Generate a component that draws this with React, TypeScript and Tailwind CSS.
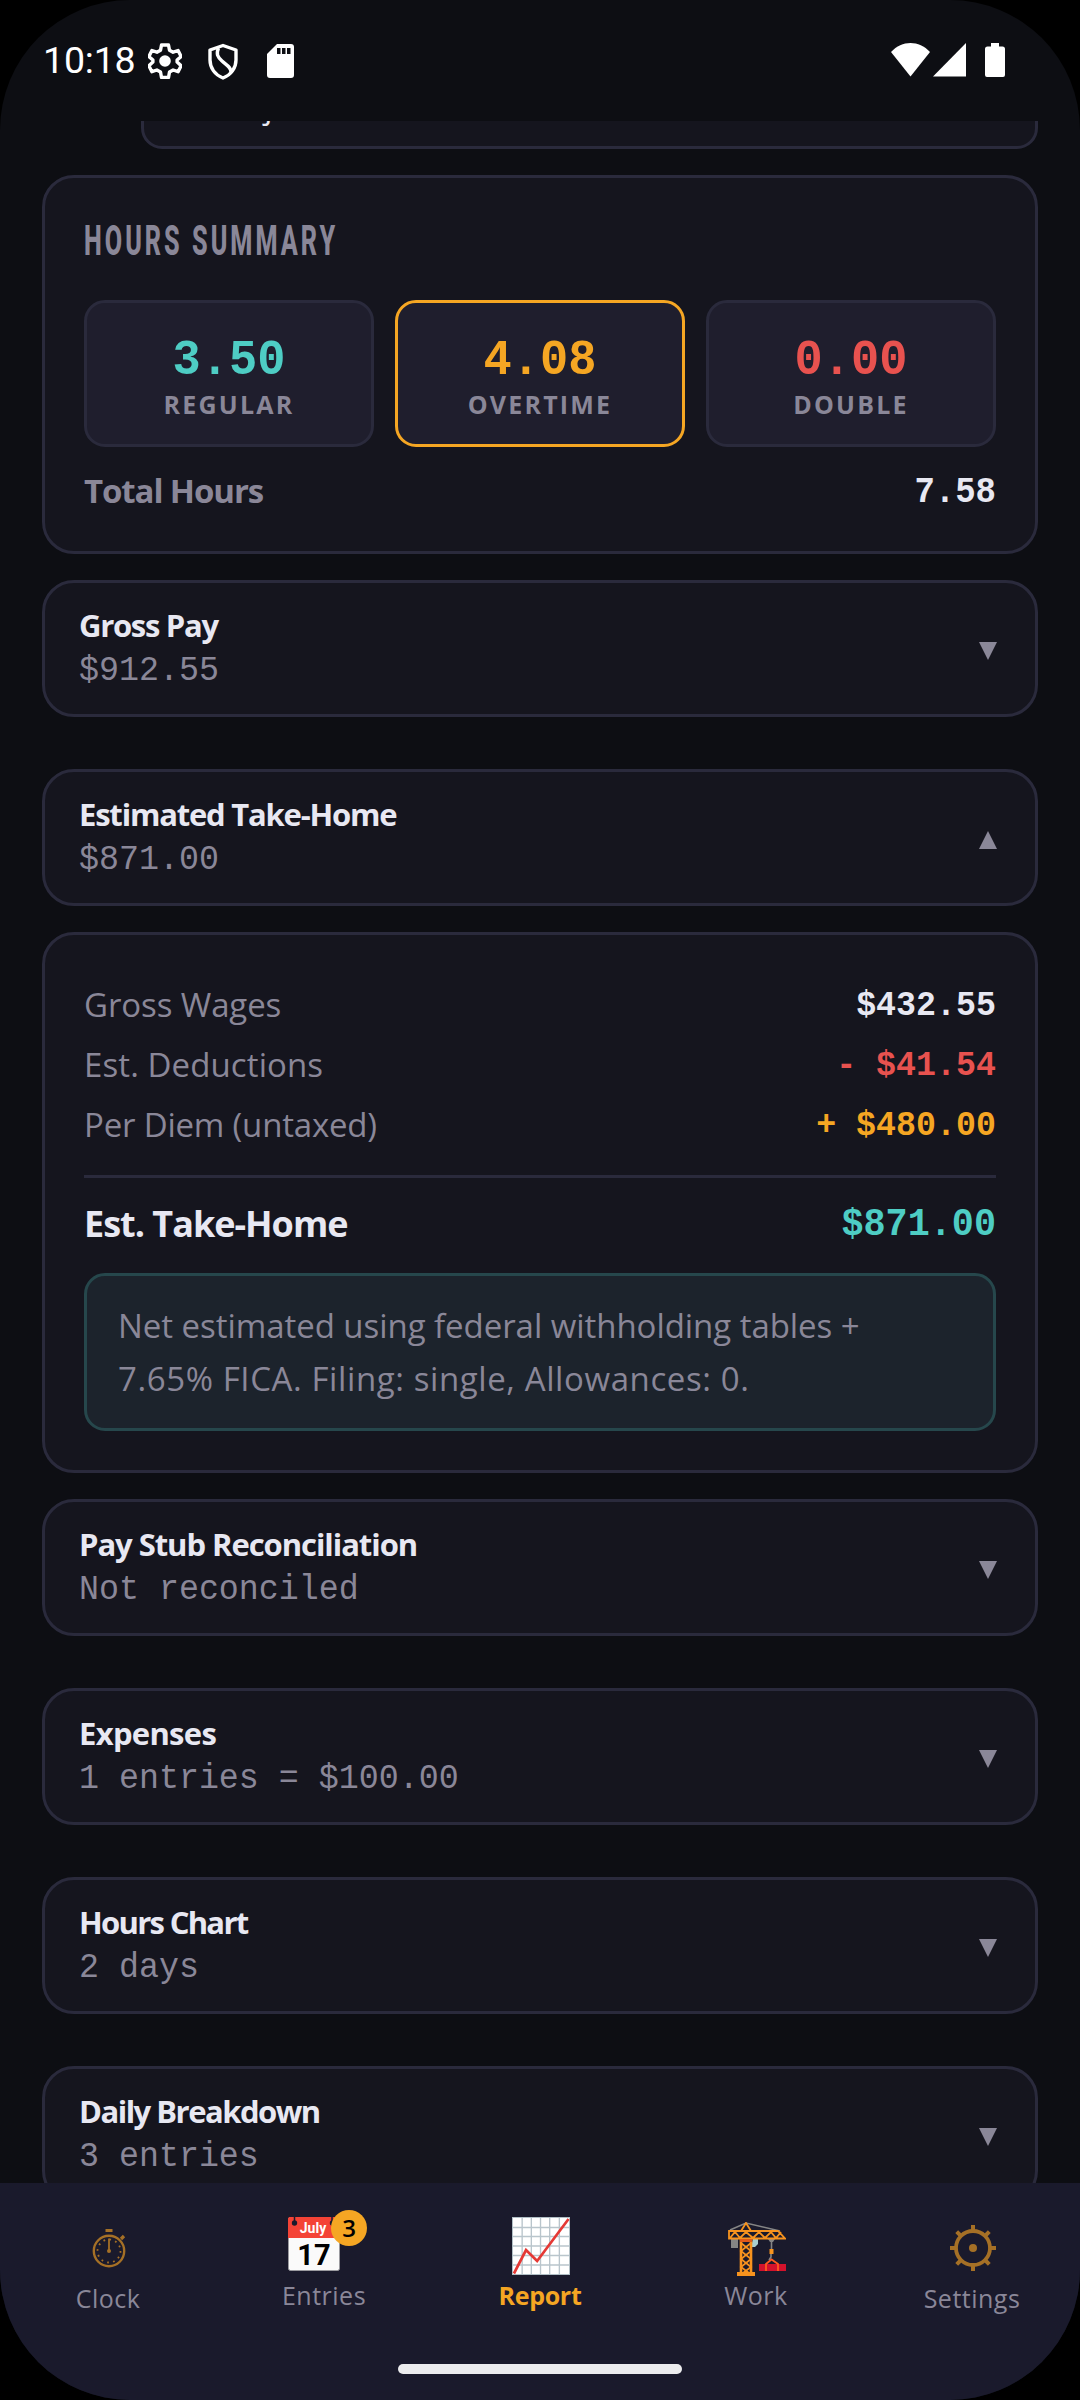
import React from 'react';
import { clsx } from 'clsx';

const sans = "font-['Open_Sans','Noto_Sans',sans-serif]";
const mono = "font-['Liberation_Mono',monospace] inline-block origin-bottom scale-y-[1.07] translate-y-[3px]";

const StatusBar: React.FC = () => (
  <header className="h-[121px] shrink-0 flex items-start justify-between pt-[43px] pl-[43px] pr-[75px] text-white">
    <div className="flex items-start">
      <span className="font-['Roboto',sans-serif] text-[37.5px] leading-[34px] tracking-[-0.2px]">10:18</span>
      <svg className="ml-[13px] w-[34px] h-[36px]" viewBox="0 0 34 36" fill="none" stroke="currentColor" strokeWidth="3.4" strokeLinejoin="round">
        <path d="M13.5 2h7l1 5.2 3.6 2 5-1.700 3 6-4 3.600v2l4 3.600-3 6-5-1.700-3.600 2-1 5.500h-7l-1-5.500-3.600-2-5 1.700-3-6 4-3.600v-2l-4-3.600 3-6 5 1.700 3.600-2z" />
        <circle cx="17" cy="18" r="5.8" fill="currentColor" stroke="none" />
      </svg>
      <svg className="ml-[25px] w-[32px] h-[37px]" viewBox="0 0 32 37" fill="none" stroke="currentColor" strokeWidth="3.4" strokeLinejoin="round">
        <path d="M16 2.500 29 7v10c0 8-5 15-13 18C8 32 3 25 3 17V7z" />
        <path d="M11.500 5c-2.500 6-1 9 3.500 13s9 6 9 11" />
      </svg>
      <svg className="ml-[28px] mt-px w-[27px] h-[34px]" viewBox="0 0 27 34">
        <path d="M10 0h14a3 3 0 0 1 3 3v28a3 3 0 0 1-3 3H3a3 3 0 0 1-3-3V10z" fill="currentColor" />
        <path d="M10 4h3.500v6H10zM15 4h3.500v6H15zM20 4h3.500v6H20z" fill="#0d0e13" />
      </svg>
    </div>
    <div className="flex items-start">
      <svg className="w-[39px] h-[34px]" viewBox="0 0 39 34" fill="currentColor">
        <path d="M0 9C11-3 28-3 39 9L19.500 33.500z" />
      </svg>
      <svg className="ml-[3px] w-[33px] h-[34px]" viewBox="0 0 33 34" fill="currentColor">
        <path d="M33 0v33.500H0z" />
      </svg>
      <svg className="ml-[19px] w-[20px] h-[34px]" viewBox="0 0 20 34" fill="currentColor">
        <path d="M6 0h8v3.500h3.500A2.500 2.500 0 0 1 20 6v26a2 2 0 0 1-2 2H2a2 2 0 0 1-2-2V6a2.500 2.500 0 0 1 2.500-2.500H6z" />
      </svg>
    </div>
  </header>
);

interface Stat {
  value: string;
  label: string;
  color: string;
  border: string;
}

const stats: Stat[] = [
  { value: '3.50', label: 'REGULAR', color: 'text-[#4ecdc4]', border: 'border-[#2a2a3c]' },
  { value: '4.08', label: 'OVERTIME', color: 'text-[#f5a623]', border: 'border-[#f5a623]' },
  { value: '0.00', label: 'DOUBLE', color: 'text-[#e8524f]', border: 'border-[#2a2a3c]' },
];

const HoursSummary: React.FC = () => (
  <section className="h-[379px] shrink-0 rounded-[32px] border-[3px] border-[#2a2a3c] bg-[#15151e] px-[39px] pt-[41px]">
    <h2 className="h-[44px] w-[500px] origin-left scale-x-[0.6] whitespace-nowrap font-['Roboto',sans-serif] text-[42px] leading-[44px] font-extrabold tracking-[5px] text-[#8a8798]">
      HOURS SUMMARY
    </h2>
    <div className="mt-[37px] grid grid-cols-3 gap-[21px]">
      {stats.map(s => (
        <div key={s.label} className={clsx('h-[147px] rounded-[21px] border-[3px] bg-[#1f1e2d] flex flex-col items-center pt-[29px]', s.border)}>
          <span className={clsx(mono, 'text-[47px] leading-[56px] font-bold', s.color)}>{s.value}</span>
          <span className={clsx(sans, '-mt-0.5 text-[25px] leading-[36px] font-bold tracking-[2.2px] text-[#8a8798]')}>{s.label}</span>
        </div>
      ))}
    </div>
    <div className="mt-[21px] flex justify-between items-center h-[46px]">
      <span className={clsx(sans, 'text-[33px] font-bold tracking-[-1.1px] text-[#8a8798]')}>Total Hours</span>
      <span className={clsx(mono, 'text-[34px] font-bold text-[#e8e8f2]')}>7.58</span>
    </div>
  </section>
);

interface AccordionProps {
  title: string;
  detail: string;
  tracking: string;
  open?: boolean;
}

const Accordion: React.FC<AccordionProps> = ({ title, detail, tracking, open }) => (
  <section className="h-[137px] shrink-0 rounded-[32px] border-[3px] border-[#2a2a3c] bg-[#15151e] pl-[34px] pr-[38px] flex items-center justify-between">
    <div className="flex flex-col items-start pb-0.5">
      <h3 className={clsx(sans, tracking, 'text-[31px] leading-[42px] font-bold text-[#e8e8f2]')}>{title}</h3>
      <p className={clsx(mono, 'text-[33.3px] leading-[46px] whitespace-pre text-[#8a8798]')}>{detail}</p>
    </div>
    <svg className="w-[18px] h-[18px] mt-1" viewBox="0 0 18 18" fill="#8a8798">
      <path d={open ? 'M9 0l9 18H0z' : 'M0 0h18L9 18z'} />
    </svg>
  </section>
);

const payRows = [
  { label: 'Gross Wages', amount: '$432.55', color: 'text-[#e8e8f2]', tracking: 'tracking-[-0.1px]' },
  { label: 'Est. Deductions', amount: '- $41.54', color: 'text-[#e8524f]', tracking: 'tracking-[0.1px]' },
  { label: 'Per Diem (untaxed)', amount: '+ $480.00', color: 'text-[#f5a623]', tracking: 'tracking-[-0.2px]' },
];

const TakeHomeDetails: React.FC = () => (
  <section className="h-[541px] shrink-0 rounded-[32px] border-[3px] border-[#2a2a3c] bg-[#15151e] px-[39px] pt-[40px]">
    {payRows.map(row => (
      <div key={row.label} className="h-[60px] flex items-center justify-between">
        <span className={clsx(sans, row.tracking, 'text-[33px] text-[#8a8798]')}>{row.label}</span>
        <span className={clsx(mono, 'text-[33.3px] font-bold whitespace-pre', row.color)}>{row.amount}</span>
      </div>
    ))}
    <div className="mt-[20px] h-[3px] bg-[#2a2a3c]" />
    <div className="mt-[16px] h-[60px] flex items-center justify-between">
      <span className={clsx(sans, 'text-[36px] font-bold tracking-[-1px] text-[#e8e8f2]')}>Est. Take-Home</span>
      <span className={clsx(mono, 'text-[36.8px] font-bold text-[#4ecdc4]')}>$871.00</span>
    </div>
    <p className={clsx(sans, 'mt-[19px] h-[158px] rounded-[21px] border-[3px] border-[#26474c] bg-[#1c232c] px-[31px] pt-[23px] text-[33px] leading-[53px] whitespace-nowrap text-[#8a8798]')}>
      <span className="block tracking-[-0.05px]">Net estimated using federal withholding tables +</span>
      <span className="block tracking-[0.6px]">7.65% FICA. Filing: single, Allowances: 0.</span>
    </p>
  </section>
);

const ClockIcon: React.FC = () => (
  <svg className="w-[34px] h-[40px] ml-[2px]" viewBox="0 0 34 40" fill="none" stroke="#a57026">
    <circle cx="17" cy="23" r="15.2" strokeWidth="2.4" />
    <circle cx="17" cy="23" r="11.5" strokeWidth="1.8" strokeDasharray="1.8 4.22" />
    <path d="M17 23V10.500" strokeWidth="1.8" />
    <path d="M13.500 2.500h7M29 11l3-3" strokeWidth="3.2" />
    <circle cx="17" cy="23" r="2" fill="#a57026" stroke="none" />
  </svg>
);

const CalendarIcon: React.FC = () => (
  <svg className="w-[52px] h-[54px] mr-[20px]" viewBox="0 0 52 54">
    <rect x="0.5" y="0.5" width="51" height="53" rx="2" fill="#fafafa" stroke="#9a9a9f" />
    <path d="M0 2a2 2 0 0 1 2-2h48a2 2 0 0 1 2 2v19H0z" fill="#f44336" />
    <path d="M6.500 0v5M44 0v5" stroke="#1a1a2c" strokeWidth="1.5" />
    <circle cx="6.5" cy="6" r="2.7" fill="#1a1a2c" />
    <circle cx="44.5" cy="6" r="2.7" fill="#1a1a2c" />
    <text x="25" y="15.5" textAnchor="middle" fontFamily="Roboto" fontSize="14" fontWeight="700" fill="#fff">July</text>
    <text x="26" y="47.5" textAnchor="middle" fontFamily="Roboto" fontSize="29" fontWeight="700" fill="#000">17</text>
  </svg>
);

const ChartIcon: React.FC = () => (
  <svg className="w-[58px] h-[58px] ml-[2px]" viewBox="0 0 60 58" preserveAspectRatio="none" fill="none">
    <rect width="60" height="58" fill="#fff" />
    <path d="M10.500 0v58M20 0v58M29.500 0v58M39 0v58M49 0v58M0 10.500h60M0 19.500h60M0 29h60M0 38.500h60M0 48h60" stroke="#b9c5cc" strokeWidth="1.4" />
    <rect x="0.5" y="0.5" width="59" height="57" stroke="#b0bec5" />
    <path d="M2 56.500 14.500 33l11.500 11L58.500 2" stroke="#e53935" strokeWidth="2.8" />
  </svg>
);

const CraneIcon: React.FC = () => (
  <svg className="w-[58px] h-[54px] ml-[2px]" viewBox="0 0 58 54" fill="none">
    <path d="M2 8 18 1l34 8" stroke="#858585" strokeWidth="1.6" />
    <path d="M3 17h7v9H3zM40 17h7l-2 3h-3z" fill="#858585" />
    <path d="M25 17h5v5l-3 3h-4z" fill="#a8cfd0" />
    <path d="M1 9h49l7 7.500H1zM13 9l5-8 5 8M2 16l5-6 5 6 6-6 7 6 6-6 6 6 6-6 5 6 5-6" stroke="#f7931e" strokeWidth="1.8" />
    <path d="M13 17v34M23 17v34" stroke="#f7931e" strokeWidth="2.6" />
    <path d="m13 21 10 8-10 8 10 8-8 6M23 21l-10 8 10 8-10 8 8 6" stroke="#f7931e" strokeWidth="1.7" />
    <path d="M12 17h12v3H12z" fill="#e05a1a" />
    <path d="M9 50h18v4H9z" fill="#f7931e" />
    <path d="M43.500 20v8M43 32v3l-2 3" stroke="#858585" strokeWidth="1.6" />
    <path d="M41.500 27h4v5h-4z" fill="#f7931e" />
    <path d="M31 42h27v7H31z" fill="#d3122c" />
    <path d="M38 49v-7l5.500-4.500L50 42v7" stroke="#ff5a1f" strokeWidth="1.8" />
  </svg>
);

const SettingsIcon: React.FC = () => (
  <svg className="w-[46px] h-[46px] ml-[2px]" viewBox="0 0 46 46" fill="none" stroke="#a57026">
    <circle cx="23" cy="23" r="17" strokeWidth="3.8" />
    <circle cx="23" cy="23" r="4" fill="#a57026" stroke="none" />
    <path d="M23 0v6M23 40v6M0 23h6M40 23h6M6.700 6.700l4.300 4.300M35 35l4.300 4.300M39.300 6.700 35 11M11 35l-4.300 4.300" strokeWidth="4" />
  </svg>
);

const tabs = [
  { label: 'Clock', icon: <ClockIcon />, pad: 'pt-[45px]', iconBox: 'h-[52px]', tracking: 'tracking-[0.5px]' },
  { label: 'Entries', icon: <CalendarIcon />, pad: 'pt-[34px]', iconBox: 'h-[60px]', badge: 3, tracking: 'tracking-[0.5px]' },
  { label: 'Report', icon: <ChartIcon />, pad: 'pt-[34px]', iconBox: 'h-[60px]', active: true, tracking: 'tracking-[-0.3px]' },
  { label: 'Work', icon: <CraneIcon />, pad: 'pt-[39px]', iconBox: 'h-[55px]', tracking: 'tracking-[0.5px]' },
  { label: 'Settings', icon: <SettingsIcon />, pad: 'pt-[42px]', iconBox: 'h-[55px]', tracking: 'tracking-[0.5px]' },
];

const TabBar: React.FC = () => (
  <nav className="h-[217px] shrink-0 bg-[#1a1a2c] flex flex-col items-center">
    <div className="h-[181px] w-full grid grid-cols-5">
      {tabs.map(tab => (
        <div key={tab.label} className={clsx('relative flex flex-col items-center', tab.pad)}>
          <div className={tab.iconBox}>{tab.icon}</div>
          <span className={clsx(sans, tab.tracking, 'text-[25px] leading-[36px]', tab.active ? 'font-bold text-[#f5a623]' : 'text-[#8a8798]')}>
            {tab.label}
          </span>
          {tab.badge && (
            <span className={clsx(sans, 'absolute left-[115px] top-[27px] w-[36px] h-[36px] rounded-full bg-[#f5a623] text-black text-[24px] leading-[36px] font-semibold text-center')}>
              {tab.badge}
            </span>
          )}
        </div>
      ))}
    </div>
    <div className="w-[284px] h-[10px] rounded-full bg-[#ececee]" />
  </nav>
);

export default function App() {
  return (
    <div className="w-[1080px] h-[2400px] bg-black">
      <div className="w-full h-full rounded-[130px] overflow-hidden bg-[#0d0e13] flex flex-col">
        <StatusBar />
        <main className="flex-1 min-h-0 overflow-hidden px-[42px] flex flex-col">
          <div className="h-[28px] shrink-0 ml-[99px] flex flex-col justify-end overflow-hidden">
            <div className={clsx(sans, 'h-[110px] shrink-0 rounded-[21px] border-[3px] border-[#2a2a3c] bg-[#15151e] pl-[21px] pt-[41px] text-[33px] leading-[45px] text-[#e8e8f2]')}>
              All Projects
            </div>
          </div>
          <div className="mt-[26px] flex flex-col gap-[26px]">
            <HoursSummary />
            <Accordion title="Gross Pay" detail="$912.55" tracking="tracking-[-1.3px]" />
            <div className="mt-[26px] flex flex-col gap-[26px]">
              <Accordion title="Estimated Take-Home" detail="$871.00" tracking="tracking-[-1.2px]" open />
              <TakeHomeDetails />
            </div>
            <div className="flex flex-col gap-[52px]">
              <Accordion title="Pay Stub Reconciliation" detail="Not reconciled" tracking="tracking-[-1.05px]" />
              <Accordion title="Expenses" detail="1 entries = $100.00" tracking="tracking-[-0.7px]" />
              <Accordion title="Hours Chart" detail="2 days" tracking="tracking-[-1.7px]" />
              <Accordion title="Daily Breakdown" detail="3 entries" tracking="tracking-[-1.5px]" />
            </div>
          </div>
        </main>
        <TabBar />
      </div>
    </div>
  );
}
